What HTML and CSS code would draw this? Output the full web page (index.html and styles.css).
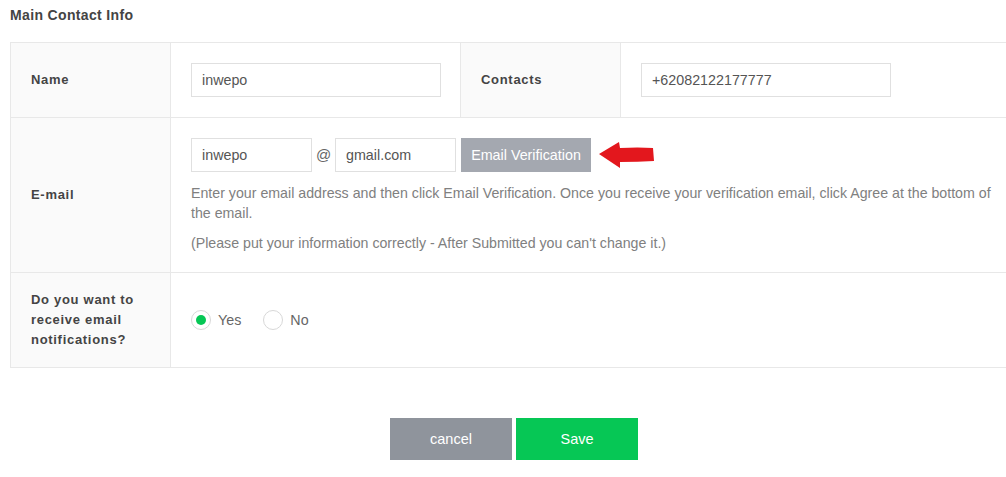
FILE: index.html
```html
<!doctype html>
<html lang="en">
<head>
    <meta charset="UTF-8">
    <title>Main Contact Info</title>
    <link rel="stylesheet" href="styles.css">
</head>
<body>
<div class="page">
    <h3 class="title">Main Contact Info</h3>

    <table class="info">
        <colgroup>
            <col class="c-label">
            <col class="c-value">
            <col class="c-label">
            <col>
        </colgroup>
        <tr class="row-name">
            <th>Name</th>
            <td><input class="txt" type="text" value="inwepo"></td>
            <th>Contacts</th>
            <td><input class="txt" type="text" value="+62082122177777"></td>
        </tr>
        <tr class="row-mail">
            <th>E-mail</th>
            <td colspan="3">
                <div class="mail-line">
                    <input class="txt short" type="text" value="inwepo">
                    <span class="at">@</span>
                    <input class="txt short" type="text" value="gmail.com">
                    <button class="btn-verify" type="button">Email Verification</button>
                    <svg class="arrow" width="58" height="28" viewBox="0 0 58 28">
                        <path d="M1 13 L21 1 L22 7 Q40 6 55 7 L56 20 Q40 21 22 21 L22 27 Z" fill="#e3171d"/>
                    </svg>
                </div>
                <p class="help">Enter your email address and then click Email Verification. Once you receive your verification email, click Agree at the bottom of<br>the email.</p>
                <p class="help">(Please put your information correctly - After Submitted you can't change it.)</p>
            </td>
        </tr>
        <tr class="row-notice">
            <th>Do you want to<br>receive email<br>notifications?</th>
            <td colspan="3">
                <div class="radios">
                    <label class="radio"><span class="dot on"></span>Yes</label>
                    <label class="radio"><span class="dot"></span>No</label>
                </div>
            </td>
        </tr>
    </table>

    <div class="actions">
        <button class="btn cancel" type="button">cancel</button>
        <button class="btn save" type="button">Save</button>
    </div>
</div>
</body>
</html>
```

FILE: styles.css
```css
*{margin:0;padding:0;box-sizing:border-box;}
html,body{overflow:hidden;}
body{
	background:#fff;
	font-family:"Liberation Sans", Arial, sans-serif;
	font-size:13px;
	color:#555;
}
.page{
	width:1018px;
	padding:0 0 0 10px;
}
.title{
	font-size:14px;
	font-weight:bold;
	letter-spacing:0.35px;
	color:#444;
	line-height:16px;
	padding-top:7px;
	height:42px;
}
.info{
	width:100%;
	table-layout:fixed;
	border-collapse:collapse;
	border-top:1px solid #e8e8e8;
	border-left:1px solid #e8e8e8;
}
.c-label{width:160px;}
.c-value{width:290px;}
.info th,.info td{
	border-bottom:1px solid #e8e8e8;
	border-right:1px solid #e8e8e8;
	text-align:left;
	vertical-align:middle;
}
.info th{
	background:#fafafa;
	padding:0 20px;
	font-size:13px;
	font-weight:bold;
	letter-spacing:0.7px;
	line-height:20px;
	color:#444;
}
.info td{
	padding:0 20px;
}
.row-name th,.row-name td{height:75px;}
.row-mail th,.row-mail td{height:155px;}
.row-notice th,.row-notice td{height:95px;}

.txt{
	width:250px;
	height:34px;
	border:1px solid #e0e0e0;
	padding:0 10px;
	font-family:"Liberation Sans", Arial, sans-serif;
	font-size:14.3px;
	color:#555;
	outline:none;
	background:#fff;
}
.txt.short{width:121px;}
.mail-line{
	display:flex;
	align-items:center;
	height:34px;
}
.at{
	width:23px;
	text-align:center;
	font-size:15px;
	color:#666;
}
.btn-verify{
	margin-left:5px;
	width:130px;
	height:34px;
	border:0;
	background:#a4a8b0;
	color:#fff;
	font-family:"Liberation Sans", Arial, sans-serif;
	font-size:14.3px;
}
.arrow{margin-left:7px;}
.help{
	margin-top:10px;
	font-size:14.2px;
	line-height:20px;
	color:#808080;
	white-space:nowrap;
}
.help:first-of-type{margin-top:11px;}
.radios{
	display:flex;
	align-items:center;
	gap:22px;
}
.radio{
	display:flex;
	align-items:center;
	font-size:14.3px;
	color:#666;
}
.dot{
	width:20px;
	height:20px;
	border:1px solid #d8d8d8;
	border-radius:50%;
	margin-right:7px;
	display:flex;
	align-items:center;
	justify-content:center;
}
.dot.on::after{
	content:"";
	width:10px;
	height:10px;
	border-radius:50%;
	background:#06c755;
}
.actions{
	display:flex;
	justify-content:center;
	gap:4px;
	margin-top:50px;
}
.btn{
	width:122px;
	height:42px;
	border:0;
	color:#fff;
	font-family:"Liberation Sans", Arial, sans-serif;
	font-size:14.5px;
}
.cancel{background:#8f949c;}
.save{background:#06c755;}
```
